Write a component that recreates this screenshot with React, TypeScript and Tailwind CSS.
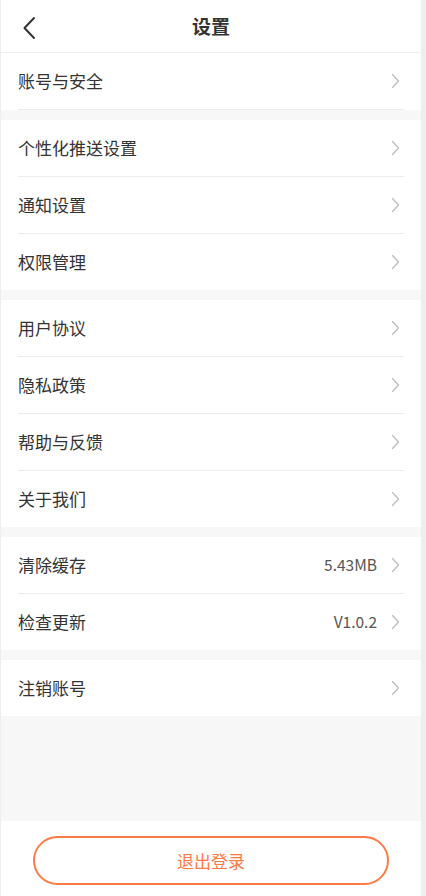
import React from "react";

const font = { fontFamily: '"Noto Sans CJK SC", "Noto Sans", sans-serif' };

function Chevron() {
  return (
    <svg width="9" height="16" viewBox="0 0 9 16" className="shrink-0">
      <path d="M1.5 1.5 L7.5 8 L1.5 14.5" fill="none" stroke="#bdbdbd" strokeWidth="1.3" strokeLinecap="round" strokeLinejoin="round" />
    </svg>
  );
}

type Item = { label: string; value?: string };

function Row({ item, last }: { item: Item; last: boolean }) {
  return (
    <div className={`mx-[17px] flex h-[56px] items-center justify-between ${last ? "" : "border-b border-[#ececec] box-content"}`}>
      <span className="text-[17px] text-[#333333]">{item.label}</span>
      <div className="flex items-center gap-[14px] pr-[4px]">
        {item.value && <span className="text-[15.5px] text-[#555555]">{item.value}</span>}
        <Chevron />
      </div>
    </div>
  );
}

function Group({ items, lastBorder }: { items: Item[]; lastBorder?: boolean }) {
  return (
    <div className="bg-white">
      {items.map((it, i) => (
        <Row key={it.label} item={it} last={i === items.length - 1 && !lastBorder} />
      ))}
    </div>
  );
}

export default function App() {
  return (
    <div className="flex h-[896px] w-[426px] bg-[#eeeeee]" style={font}>
      <div className="ml-[1px] flex w-[420px] flex-col bg-[#f7f7f7]">
        <div className="relative flex h-[53px] items-center justify-center border-b border-[#eeeeee] bg-white">
          <svg width="14" height="24" viewBox="0 0 14 24" className="absolute left-[21px] top-[16px]">
            <path d="M12 2 L2.5 12 L12 22" fill="none" stroke="#333333" strokeWidth="2" strokeLinecap="round" strokeLinejoin="round" />
          </svg>
          <span className="text-[19px] font-bold text-[#333333]">设置</span>
        </div>
        <Group items={[{ label: "账号与安全" }]} lastBorder />
        <div className="mt-[10px]">
          <Group items={[{ label: "个性化推送设置" }, { label: "通知设置" }, { label: "权限管理" }]} />
        </div>
        <div className="mt-[10px]">
          <Group items={[{ label: "用户协议" }, { label: "隐私政策" }, { label: "帮助与反馈" }, { label: "关于我们" }]} />
        </div>
        <div className="mt-[10px]">
          <Group items={[{ label: "清除缓存", value: "5.43MB" }, { label: "检查更新", value: "V1.0.2" }]} />
        </div>
        <div className="mt-[10px]">
          <Group items={[{ label: "注销账号" }]} />
        </div>
        <div className="flex-1" />
        <div className="h-[75px] bg-white px-[32px] pt-[15px]">
          <div className="flex h-[49px] items-center justify-center rounded-full border-2 border-[#ff7a45]">
            <span className="text-[17px] text-[#ff7a45]">退出登录</span>
          </div>
        </div>
      </div>
    </div>
  );
}
